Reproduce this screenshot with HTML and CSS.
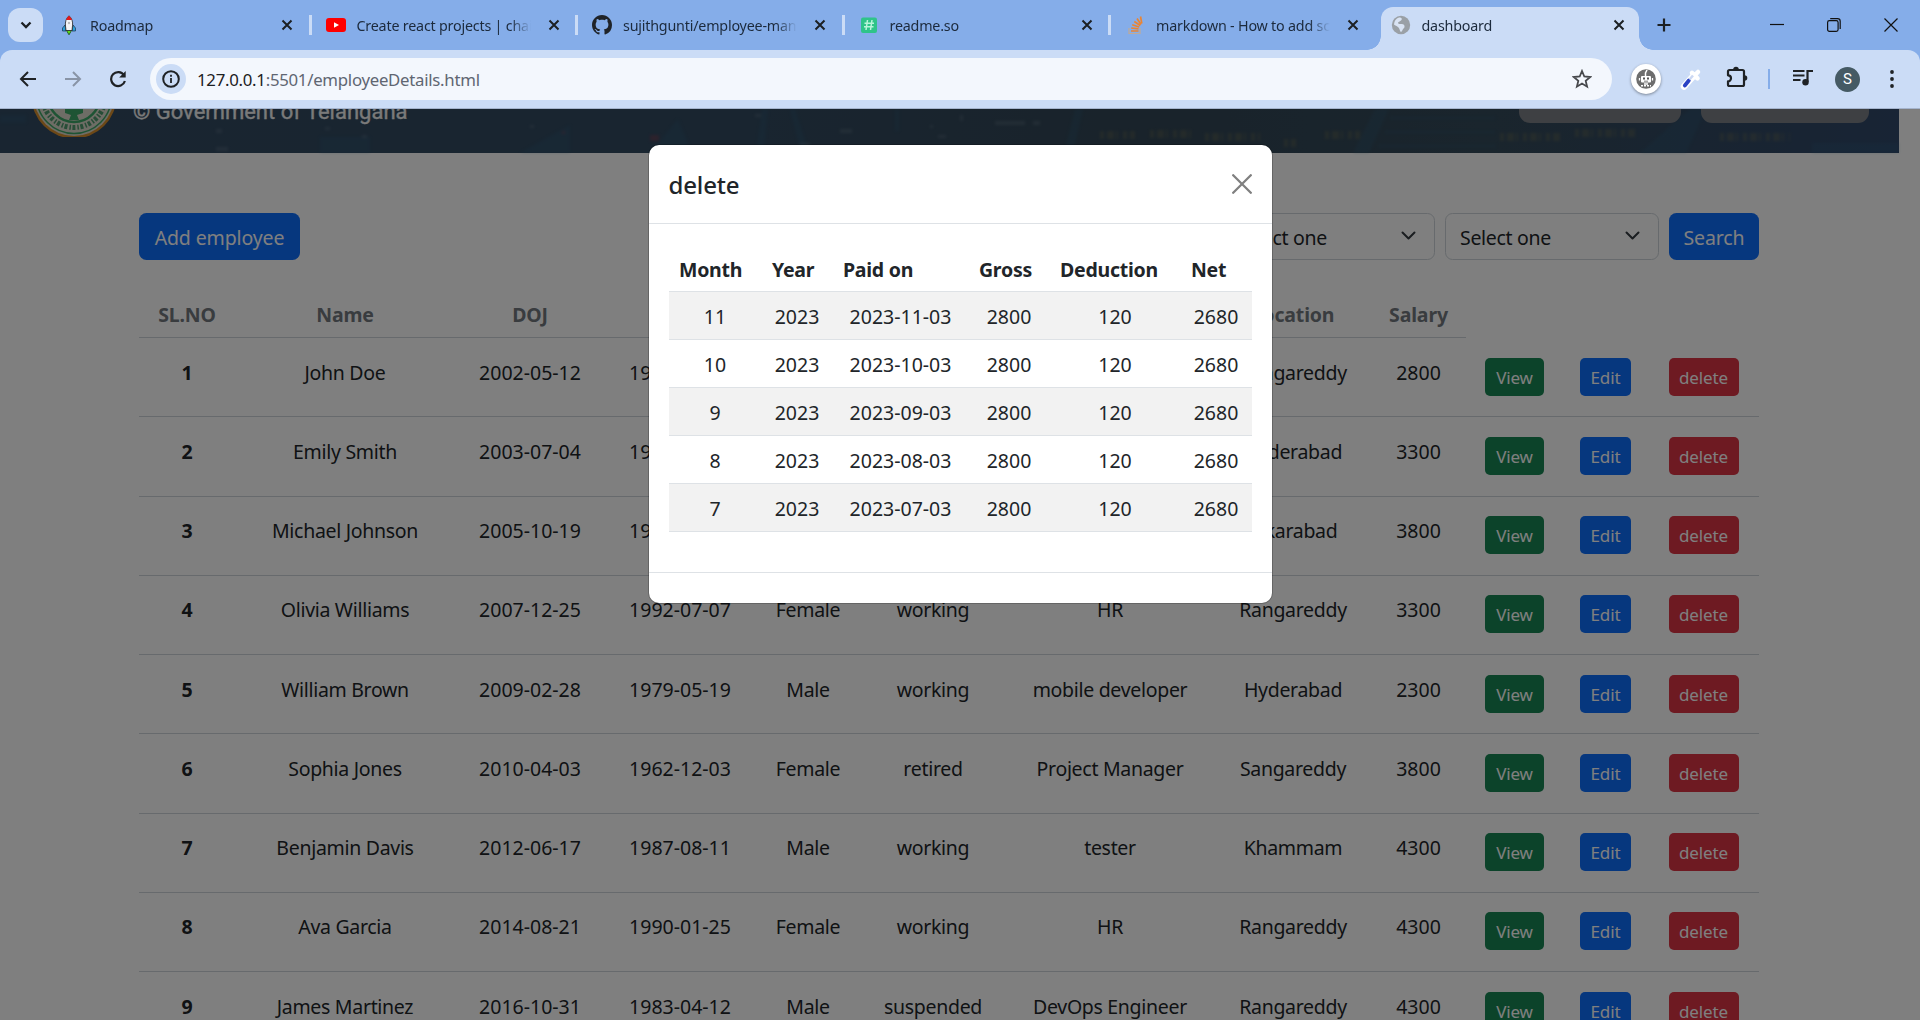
FILE: index.html
```html
<!DOCTYPE html>
<html lang="en">
<head>
<meta charset="utf-8">
<title>dashboard</title>
<link rel="stylesheet" href="styles.css">
</head>
<body>
<svg class="defs" width="0" height="0" aria-hidden="true">
  <symbol id="x" viewBox="0 0 12 12"><path d="M1.5 1.5l9 9M10.5 1.5l-9 9" stroke="#1c2023" stroke-width="2" fill="none"/></symbol>
</svg>

<header class="tabstrip">
  <button class="tab-search"><svg width="12" height="8" viewBox="0 0 12 8"><path d="M1.5 1.5L6 6l4.500-4.500" fill="none" stroke="#1c2023" stroke-width="2.300"/></svg></button>
  <div class="tab">
    <svg class="fav" viewBox="0 0 20 20"><path d="M6 10l-2.500 3v3H7zM14 10l2.500 3v3H13z" fill="#2ba0dc" stroke="#123" stroke-width=".6"/><path d="M7.500 15.500h5L10 19.800z" fill="#5fe01a" stroke="#164a12" stroke-width=".8"/><path d="M10 .8c3 2.500 4 6 3.500 10L13 15.500H7L6.500 11C6 7 7 3.300 10 .8z" fill="#f4f4f6" stroke="#222" stroke-width=".8"/><path d="M10 .8c1.500 1.300 2.400 2.600 2.900 4.200H7.100C7.600 3.400 8.500 2.100 10 .8z" fill="#e3181c"/><circle cx="10" cy="8" r="1.200" fill="#bbb"/></svg>
    <span class="title">Roadmap</span><svg class="close"><use href="#x"/></svg>
  </div>
  <div class="tab">
    <svg class="fav" viewBox="0 0 20 20"><rect x="0" y="3" width="20" height="14" rx="3" fill="#f00"/><path d="M8 7.200l5 2.800-5 2.800z" fill="#fff"/></svg>
    <span class="title">Create react projects | chai aur code</span><svg class="close"><use href="#x"/></svg>
  </div>
  <div class="tab">
    <svg class="fav" viewBox="0 0 16 16"><path fill="#1f2328" d="M8 0C3.580 0 0 3.580 0 8c0 3.540 2.290 6.530 5.470 7.590.4.070.55-.17.55-.38 0-.19-.01-.82-.01-1.490-2.010.37-2.530-.49-2.690-.94-.09-.23-.48-.94-.82-1.130-.28-.15-.68-.52-.01-.53.63-.01 1.080.58 1.230.82.72 1.210 1.870.87 2.330.66.07-.52.28-.87.51-1.070-1.780-.2-3.640-.89-3.640-3.950 0-.87.31-1.590.82-2.150-.08-.2-.36-1.020.08-2.120 0 0 .67-.21 2.200.82.64-.18 1.320-.27 2-.27s1.360.09 2 .27c1.530-1.040 2.200-.82 2.200-.82.44 1.100.16 1.920.08 2.120.51.56.82 1.270.82 2.150 0 3.070-1.870 3.750-3.650 3.950.29.25.54.73.54 1.480 0 1.070-.01 1.930-.01 2.200 0 .21.15.46.55.38A8.010 8.010 0 0016 8c0-4.420-3.580-8-8-8z"/></svg>
    <span class="title">sujithgunti/employee-management</span><svg class="close"><use href="#x"/></svg>
  </div>
  <div class="tab">
    <svg class="fav" viewBox="0 0 20 20"><rect x="2" y="2.500" width="16" height="15.500" rx="2" fill="#2fc489"/><path d="M8.500 5l-1.500 10M13 5l-1.500 10M5.500 8.300h9.500M5 11.800h9.500" stroke="#b9f5da" stroke-width="1.500"/></svg>
    <span class="title">readme.so</span><svg class="close"><use href="#x"/></svg>
  </div>
  <div class="tab last">
    <svg class="fav" viewBox="0 0 20 20"><path d="M4 13v5.500h11V13" fill="none" stroke="#c0aa97" stroke-width="1.200"/><path d="M6 16h7.500M6.200 13l7.300.9M7.200 9.800l7 2.200M9.300 6.500l6 4M12 3.500l4 6M15.500 1.500l1.300 7" stroke="#ea8433" stroke-width="1.700"/></svg>
    <span class="title">markdown - How to add screenshot</span><svg class="close"><use href="#x"/></svg>
  </div>
  <div class="tab active">
    <svg class="fav" viewBox="0 0 20 20"><circle cx="10" cy="10" r="9.200" fill="#9aa0a6"/><path d="M8 2.500c3 0 3.500 1.500 2 3L7 7.500c0 2 2 1.500 4 1.500 2.500 0 3.500 3 1.500 4.500-1 .8-1 2.500-2.500 3.500-1.500-.8-1-3-2.500-4.500C6 11 4 10.500 3 9.500 3.300 6 5 3.500 8 2.500z" fill="#d9e3f3"/></svg>
    <span class="title">dashboard</span><svg class="close"><use href="#x"/></svg>
  </div>
  <svg class="newtab" width="14" height="14" viewBox="0 0 14 14"><path d="M7 .5v13M.5 7h13" stroke="#1c2023" stroke-width="2.200"/></svg>
  <div class="winbtns">
    <svg width="14" height="14" viewBox="0 0 14 14"><path d="M0 6.500h14" stroke="#111" stroke-width="1.200"/></svg>
    <svg width="14" height="14" viewBox="0 0 14 14"><rect x=".6" y="2.600" width="10.500" height="10.800" rx="1.800" fill="none" stroke="#111" stroke-width="1.200"/><path d="M3.200.6h7.400a2.600 2.600 0 012.600 2.600v7.800" fill="none" stroke="#111" stroke-width="1.200"/></svg>
    <svg width="14" height="14" viewBox="0 0 14 14"><path d="M.5.5l13 13M13.500.5l-13 13" stroke="#111" stroke-width="1.200"/></svg>
  </div>
</header>

<nav class="toolbar">
  <div class="navicons">
    <svg width="18" height="18" viewBox="0 0 18 18"><path d="M17 9H2.500M9 2L2 9l7 7" fill="none" stroke="#1f2225" stroke-width="2"/></svg>
    <svg width="18" height="18" viewBox="0 0 18 18"><path d="M1 9h14.500M9 2l7 7-7 7" fill="none" stroke="#8994a6" stroke-width="2"/></svg>
    <svg width="18" height="18" viewBox="0 0 18 18"><path d="M15 5.200A7 7 0 1015.900 11" fill="none" stroke="#1f2225" stroke-width="2.200"/><path d="M16.700 1v6.500h-6.500z" fill="#1f2225"/></svg>
  </div>
  <div class="omnibox">
    <span class="info"><svg width="18" height="18" viewBox="0 0 18 18"><circle cx="9" cy="9" r="7.800" fill="none" stroke="#1f2225" stroke-width="2"/><path d="M9 8v5M9 4.800v2" stroke="#1f2225" stroke-width="1.800"/></svg></span>
    <span class="url"><b>127.0.0.1</b>:5501/employeeDetails.html</span>
    <svg class="star" width="20" height="20" viewBox="0 0 20 20"><path d="M10 2l2.300 5.500 5.900.5-4.500 3.900 1.400 5.800L10 14.600l-5.100 3.100 1.400-5.800L1.800 8l5.900-.5z" fill="none" stroke="#47494d" stroke-width="1.800"/></svg>
  </div>
  <div class="exts">
    <span class="bot"><svg width="20" height="20" viewBox="0 0 20 20"><circle cx="10" cy="10" r="9.800" fill="#6d6d6d"/><path d="M9.500 7V4l1.500-3" stroke="#fff" stroke-width="1.500" fill="none"/><rect x="5" y="7" width="10" height="6.500" rx="1" fill="#fff"/><path d="M3.500 9v2.500M16.500 9v2.500M8 15h4" stroke="#fff" stroke-width="1.300"/><path d="M5 16.800h10" stroke="#fff" stroke-width="1.500" stroke-dasharray="2 1"/><path d="M7 8.500h2v2H7zM11 8.500h2v2h-2zM8 11.700h4v.9H8z" fill="#555"/></svg></span>
    <svg class="picker" width="22" height="22" viewBox="0 0 22 22"><path d="M4 18.500L13 8.500" stroke="#fff" stroke-width="6.500" stroke-linecap="round"/><path d="M12 4.800l5.500 5.500M14.500 7.500l3.500-3.500" stroke="#fff" stroke-width="4.500" stroke-linecap="round"/><path d="M4.800 17.500l4-5" stroke="#2b43c4" stroke-width="3.800" stroke-linecap="round"/><path d="M9.500 11.500l3.500-4" stroke="#cbd8f3" stroke-width="2.500"/></svg>
    <svg class="puzzle" width="22" height="22" viewBox="0 0 22 22"><path d="M3.500 4h13a1.500 1.500 0 011.500 1.500v13a1.500 1.500 0 01-1.500 1.500h-13A1.500 1.500 0 012 18.500V15.300a3 3 0 000-6V5.500A1.500 1.500 0 013.500 4z" fill="none" stroke="#1f2225" stroke-width="2.200" stroke-linejoin="round"/><path d="M7.200 3.500a2.800 2.800 0 015.600 0zM18.500 9.200a2.800 2.800 0 010 5.600z" fill="#1f2225"/></svg>
    <i class="bar"></i>
    <svg class="music" width="20" height="18" viewBox="0 0 20 18"><path d="M0 2h11.500M0 6.500h11.500M0 11h7.500" stroke="#1f2225" stroke-width="2.200"/><path d="M14.500 13V2H20" fill="none" stroke="#1f2225" stroke-width="2.200"/><circle cx="12.500" cy="13.300" r="3.200" fill="#1f2225"/></svg>
    <span class="avatar">S</span>
    <svg class="dots" width="4" height="18" viewBox="0 0 4 18"><circle cx="2" cy="2" r="1.900"/><circle cx="2" cy="9" r="1.900"/><circle cx="2" cy="16" r="1.900"/></svg>
  </div>
</nav>

<main class="viewport">
  <section class="banner">
    <svg class="city" width="1899" height="44" viewBox="0 0 1899 44" preserveAspectRatio="none">
      <g fill="#2d6b8c" opacity=".2"><path d="M650 44l28-34 14 34zM762 0h6l-4 44h-8zM790 0h5l14 44h-8zM1075 0h8l-10 44h-9zM895 0h4v22h-4z"/><path d="M520 44l50-28v28zM1375 0h14l-20 44h-16zM1640 44l50-44h16l-20 44z"/><path d="M1390 8h105v2h-105zM1385 22h110v2h-110zM1378 36h118v2h-118zM320 28h50v16h-50zM0 6h26v8H0zM1812 34h87v10h-87z"/></g>
      <g fill="none" stroke="#867d50" opacity=".28" stroke-width="8" stroke-dasharray="4 3 7 2 2 5"><path d="M1100 26h35M1150 25h45M1205 28h55M1284 34h12M1325 26h35M1500 28h60M1575 24h60M1720 28h70"/></g>
      <g fill="#9aa9b3" opacity=".2"><path d="M995 12h30v4h-30zM1033 12h7v4h-7zM930 16h3v3h-3zM938 26h8v3h-8zM960 6h3v6h-3zM840 20h12v4h-12zM800 34h10v3h-10zM216 20h6v4h-6zM216 38h12v4h-12zM325 18h5v3h-5zM362 26h5v3h-5zM530 16h4v3h-4zM755 5h6v3h-6z"/></g>
      <g fill="#a33a4a" opacity=".35"><path d="M650 26h9v6h-9zM562 22h3v3h-3z"/></g>
    </svg>
    <svg class="seal" width="84" height="28" viewBox="0 0 84 28"><circle cx="42" cy="-13" r="42.500" fill="#d9912f"/><circle cx="42" cy="-13" r="40" fill="#dcdbcd"/><circle cx="42" cy="-13" r="37.500" fill="none" stroke="#3da868" stroke-width="1.500"/><circle cx="42" cy="-13" r="31.500" fill="none" stroke="#4f9a6e" stroke-width="5" stroke-dasharray="3 1.500 1.500 2"/><circle cx="42" cy="-13" r="26" fill="none" stroke="#3da868" stroke-width="2.500"/><path d="M33 0h18v4l-6 2 2 5H37l2-5-6-2z" fill="#3da868"/></svg>
    <p class="gov">© Government of Telangana</p>
    <div class="bannerbtns"><span class="b1"></span><span class="b2"></span></div>
  </section>

  <section class="content">
    <div class="actions">
      <button class="btn primary">Add employee</button>
      <div class="filters">
        <div class="select">Select one<svg width="15" height="10" viewBox="0 0 15 10"><path d="M1.500 1.500l6 6 6-6" fill="none" stroke="#343a40" stroke-width="2" stroke-linecap="round" stroke-linejoin="round"/></svg></div>
        <div class="select">Select one<svg width="15" height="10" viewBox="0 0 15 10"><path d="M1.500 1.500l6 6 6-6" fill="none" stroke="#343a40" stroke-width="2" stroke-linecap="round" stroke-linejoin="round"/></svg></div>
        <button class="btn primary search">Search</button>
      </div>
    </div>
    <table class="employees">
      <colgroup><col class="c1"><col class="c2"><col class="c3"><col class="c4"><col class="c5"><col class="c6"><col class="c7"><col class="c8"><col class="c9"><col class="c10"><col class="c11"><col class="c12"></colgroup>
      <thead><tr><th>SL.NO</th><th>Name</th><th>DOJ</th><th>DOB</th><th>Gender</th><th>Status</th><th>Designation</th><th>Location</th><th>Salary</th></tr></thead>
      <tbody>
        <tr><th>1</th><td>John Doe</td><td class="num">2002-05-12</td><td class="num">1980-03-15</td><td>Male</td><td>working</td><td>HR</td><td>Rangareddy</td><td class="num">2800</td><td class="act"><button class="btn sm success">View</button></td><td class="act"><button class="btn sm primary">Edit</button></td><td class="act"><button class="btn sm danger">delete</button></td></tr>
        <tr><th>2</th><td>Emily Smith</td><td class="num">2003-07-04</td><td class="num">1985-08-20</td><td>Female</td><td>working</td><td>tester</td><td>Hyderabad</td><td class="num">3300</td><td class="act"><button class="btn sm success">View</button></td><td class="act"><button class="btn sm primary">Edit</button></td><td class="act"><button class="btn sm danger">delete</button></td></tr>
        <tr><th>3</th><td>Michael Johnson</td><td class="num">2005-10-19</td><td class="num">1982-11-10</td><td>Male</td><td>working</td><td>HR</td><td>Vikarabad</td><td class="num">3800</td><td class="act"><button class="btn sm success">View</button></td><td class="act"><button class="btn sm primary">Edit</button></td><td class="act"><button class="btn sm danger">delete</button></td></tr>
        <tr><th>4</th><td>Olivia Williams</td><td class="num">2007-12-25</td><td class="num">1992-07-07</td><td>Female</td><td>working</td><td>HR</td><td>Rangareddy</td><td class="num">3300</td><td class="act"><button class="btn sm success">View</button></td><td class="act"><button class="btn sm primary">Edit</button></td><td class="act"><button class="btn sm danger">delete</button></td></tr>
        <tr><th>5</th><td>William Brown</td><td class="num">2009-02-28</td><td class="num">1979-05-19</td><td>Male</td><td>working</td><td>mobile developer</td><td>Hyderabad</td><td class="num">2300</td><td class="act"><button class="btn sm success">View</button></td><td class="act"><button class="btn sm primary">Edit</button></td><td class="act"><button class="btn sm danger">delete</button></td></tr>
        <tr><th>6</th><td>Sophia Jones</td><td class="num">2010-04-03</td><td class="num">1962-12-03</td><td>Female</td><td>retired</td><td>Project Manager</td><td>Sangareddy</td><td class="num">3800</td><td class="act"><button class="btn sm success">View</button></td><td class="act"><button class="btn sm primary">Edit</button></td><td class="act"><button class="btn sm danger">delete</button></td></tr>
        <tr><th>7</th><td>Benjamin Davis</td><td class="num">2012-06-17</td><td class="num">1987-08-11</td><td>Male</td><td>working</td><td>tester</td><td>Khammam</td><td class="num">4300</td><td class="act"><button class="btn sm success">View</button></td><td class="act"><button class="btn sm primary">Edit</button></td><td class="act"><button class="btn sm danger">delete</button></td></tr>
        <tr><th>8</th><td>Ava Garcia</td><td class="num">2014-08-21</td><td class="num">1990-01-25</td><td>Female</td><td>working</td><td>HR</td><td>Rangareddy</td><td class="num">4300</td><td class="act"><button class="btn sm success">View</button></td><td class="act"><button class="btn sm primary">Edit</button></td><td class="act"><button class="btn sm danger">delete</button></td></tr>
        <tr><th>9</th><td>James Martinez</td><td class="num">2016-10-31</td><td class="num">1983-04-12</td><td>Male</td><td>suspended</td><td>DevOps Engineer</td><td>Rangareddy</td><td class="num">4300</td><td class="act"><button class="btn sm success">View</button></td><td class="act"><button class="btn sm primary">Edit</button></td><td class="act"><button class="btn sm danger">delete</button></td></tr>
      </tbody>
    </table>
  </section>

  <div class="backdrop">
    <div class="modal">
      <div class="modal-head"><h5>delete</h5><svg width="20" height="20" viewBox="0 0 20 20"><path d="M1.200 1.200l17.600 17.600M18.800 1.200L1.200 18.800" stroke="#808080" stroke-width="2.300" stroke-linecap="round"/></svg></div>
      <div class="modal-body">
        <table class="pay">
          <colgroup><col class="p1"><col class="p2"><col class="p3"><col class="p4"><col class="p5"><col class="p6"></colgroup>
          <thead><tr><th>Month</th><th>Year</th><th>Paid on</th><th>Gross</th><th>Deduction</th><th>Net</th></tr></thead>
          <tbody>
            <tr><td>11</td><td>2023</td><td>2023-11-03</td><td>2800</td><td>120</td><td>2680</td></tr>
            <tr><td>10</td><td>2023</td><td>2023-10-03</td><td>2800</td><td>120</td><td>2680</td></tr>
            <tr><td>9</td><td>2023</td><td>2023-09-03</td><td>2800</td><td>120</td><td>2680</td></tr>
            <tr><td>8</td><td>2023</td><td>2023-08-03</td><td>2800</td><td>120</td><td>2680</td></tr>
            <tr><td>7</td><td>2023</td><td>2023-07-03</td><td>2800</td><td>120</td><td>2680</td></tr>
          </tbody>
        </table>
      </div>
      <div class="modal-foot"></div>
    </div>
  </div>
</main>
</body>
</html>
```

FILE: styles.css
```css
* { box-sizing: border-box; }
body {
  margin: 0;
  width: 1920px;
  height: 1020px;
  overflow: hidden;
  display: flex;
  flex-direction: column;
  background: #85ade9;
  color: #212529;
  font: 19.5px/30px "Noto Sans", "Open Sans", sans-serif;
}
svg { display: block; flex: none; }
.defs { position: absolute; }
button { font: inherit; border: 0; padding: 0; }

/* Browser tab strip */
.tabstrip { height: 50px; flex: none; display: flex; align-items: center; padding-left: 8px; }
.tab-search { width: 35px; height: 34px; border-radius: 12px; background: #cbdcf6; display: grid; place-items: center; margin-right: 2px; }
.tab { width: 266.5px; height: 20px; flex: none; display: flex; align-items: center; padding-left: 14px; border-right: 3px solid #cbdcf6; font-size: 14.3px; letter-spacing: -.2px; }
.tab.last { border-color: transparent; }
.fav { width: 20px; height: 20px; }
.title { width: 174px; margin-left: 11px; margin-right: 17px; line-height: 20px; padding-top: 1px; white-space: nowrap; overflow: hidden; color: #1c2a3c; -webkit-mask-image: linear-gradient(90deg, #000 88%, transparent); mask-image: linear-gradient(90deg, #000 88%, transparent); }
.close { width: 12px; height: 12px; }
.tab.active { width: 258px; height: 43px; align-self: flex-end; margin-left: 3px; padding: 0 0 7px 10px; border: 0; border-radius: 12px 12px 0 0; background: #cbdcf6; position: relative; }
.tab.active::before, .tab.active::after { content: ""; position: absolute; bottom: 0; width: 14px; height: 14px; }
.tab.active::before { left: -14px; background: radial-gradient(circle at 0 0, transparent 13.5px, #cbdcf6 14px); }
.tab.active::after { right: -14px; background: radial-gradient(circle at 100% 0, transparent 13.5px, #cbdcf6 14px); }
.newtab { margin-left: 18px; }
.winbtns { margin-left: auto; margin-right: 22px; display: flex; gap: 43px; }

/* Browser toolbar */
.toolbar { height: 59px; flex: none; display: flex; align-items: center; background: #cbdcf6; border-bottom: 1px solid #a5b4cd; border-radius: 12px 12px 0 0; padding-left: 19px; }
.navicons { display: flex; gap: 27px; width: 131px; }
.omnibox { width: 1462px; height: 42px; border-radius: 21px; background: #f3f7fd; display: flex; align-items: center; padding: 0 20px 0 6px; }
.info { width: 30px; height: 30px; border-radius: 50%; background: #cbdcf6; display: grid; place-items: center; }
.url { margin-left: 11px; flex: 1; font-size: 16.8px; line-height: 24px; color: #5f6672; padding-top: 1px; letter-spacing: -.27px; }
.url b { font-weight: 400; color: #1c2023; }
.exts { display: flex; align-items: center; }
.bot { width: 30px; height: 30px; margin-left: 19px; border-radius: 50%; background: #fff; display: grid; place-items: center; box-shadow: 0 1px 3px rgba(0,0,0,.4); }
.picker { margin-left: 19px; }
.puzzle { margin-left: 24px; margin-top: -4px; }
.bar { width: 2px; height: 20px; margin-left: 20px; background: #85ade9; }
.music { margin-left: 23px; margin-top: -2px; }
.avatar { width: 25px; height: 25px; margin-left: 22px; border-radius: 50%; background: #455a64; color: #fff; font: 15px/25px Roboto, sans-serif; text-align: center; }
.dots { margin-left: 30px; fill: #1f2225; }

/* Page */
.viewport { flex: 1; position: relative; overflow: hidden; background: #fff; }
.banner { width: 1899px; height: 44px; display: flex; align-items: flex-start; padding-left: 32px; position: relative; background: linear-gradient(90deg, #324a62, #324a60 40%, #324656 60%, #344a5a 78%, #30486a); }
.city { position: absolute; left: 0; top: 0; filter: blur(1.5px); }
.seal { position: relative; }
.gov { position: relative; margin: -12px 0 0 17px; color: #f4f4f4; font: 400 22px/30px Roboto, sans-serif; -webkit-text-stroke: .3px #f4f4f4; white-space: nowrap; }
.bannerbtns { position: relative; margin-left: auto; margin-right: 30px; display: flex; gap: 20px; }
.bannerbtns span { height: 14px; border-radius: 0 0 11px 11px; background: #7d8086; }
.b1 { width: 162px; }
.b2 { width: 168px; }
.content { width: 1620px; margin-left: 139px; padding-top: 60px; }
.actions { display: flex; justify-content: space-between; height: 47px; }
.filters { display: flex; gap: 10px; }
.btn { height: 47px; border-radius: 7.5px; color: #fff; padding-top: 2px; white-space: nowrap; letter-spacing: -.12px; }
.primary { background: #0d6efd; width: 161px; }
.search { width: 90px; }
.select { width: 214px; border: 1.25px solid #ced4da; border-radius: 7.5px; padding: 3px 18px 0 14px; display: flex; align-items: center; justify-content: space-between; letter-spacing: -.3px; }
.select svg { margin-top: -5px; }
table { border-collapse: separate; border-spacing: 0; table-layout: fixed; }
th, td { padding: 0; }
.employees { width: 1620px; margin-top: 30px; text-align: center; }
.c1 { width: 96px; } .c2 { width: 220px; } .c3 { width: 150px; } .c4 { width: 150px; }
.c5 { width: 106px; } .c6 { width: 144px; } .c7 { width: 210px; } .c8 { width: 156px; }
.c9 { width: 95px; } .c10 { width: 97px; } .c11 { width: 85px; } .c12 { width: 111px; }
.employees thead th { height: 48px; color: #73797f; padding-top: 3px; letter-spacing: -.15px; border-bottom: 1px solid #ced4da; }
.employees tbody th, .employees tbody td { height: 79.28px; border-bottom: 1px solid #ced4da; vertical-align: top; padding-top: 19.5px; }
.employees tbody td { letter-spacing: -.3px; }
.employees tbody td.num { letter-spacing: 0; }
.employees tbody td.act { padding-top: 19.5px; }
.sm { height: 38px; border-radius: 5px; font-size: 17px; display: block; margin: 0 auto; padding-top: 2px; }
.sm.success { width: 59px; background: #198754; }
.sm.primary { width: 51px; }
.sm.danger { width: 70px; background: #dc3545; }

/* Modal dialog */
.backdrop { position: absolute; inset: 0; background: rgba(0,0,0,.5); display: flex; justify-content: center; align-items: flex-start; padding-top: 36px; }
.modal { width: 623px; height: 458px; background: #fff; border-radius: 10px; outline: 1px solid rgba(0,0,0,.2); display: flex; flex-direction: column; }
.modal-head { height: 79px; display: flex; align-items: center; justify-content: space-between; padding: 0 20px; border-bottom: 1px solid #dee2e6; }
.modal-head h5 { margin: 2px 0 0; font: 500 24px/38px "Noto Sans", sans-serif; letter-spacing: -.15px; }
.modal-body { flex: 1; padding: 20px; }
.modal-foot { height: 31px; border-top: 1px solid #dee2e6; }
.pay { width: 583px; }
.p1 { width: 93px; } .p2 { width: 71px; } .p3 { width: 136px; } .p4 { width: 81px; } .p5 { width: 131px; } .p6 { width: 71px; }
.pay th { height: 48px; text-align: left; padding-left: 10.5px; padding-top: 4px; letter-spacing: -.25px; border-bottom: 1px solid #dee2e6; }
.pay td { height: 48px; text-align: center; padding-top: 3px; border-bottom: 1px solid #dee2e6; }
.pay tbody tr:nth-child(odd) { background: #f2f2f2; }
```
